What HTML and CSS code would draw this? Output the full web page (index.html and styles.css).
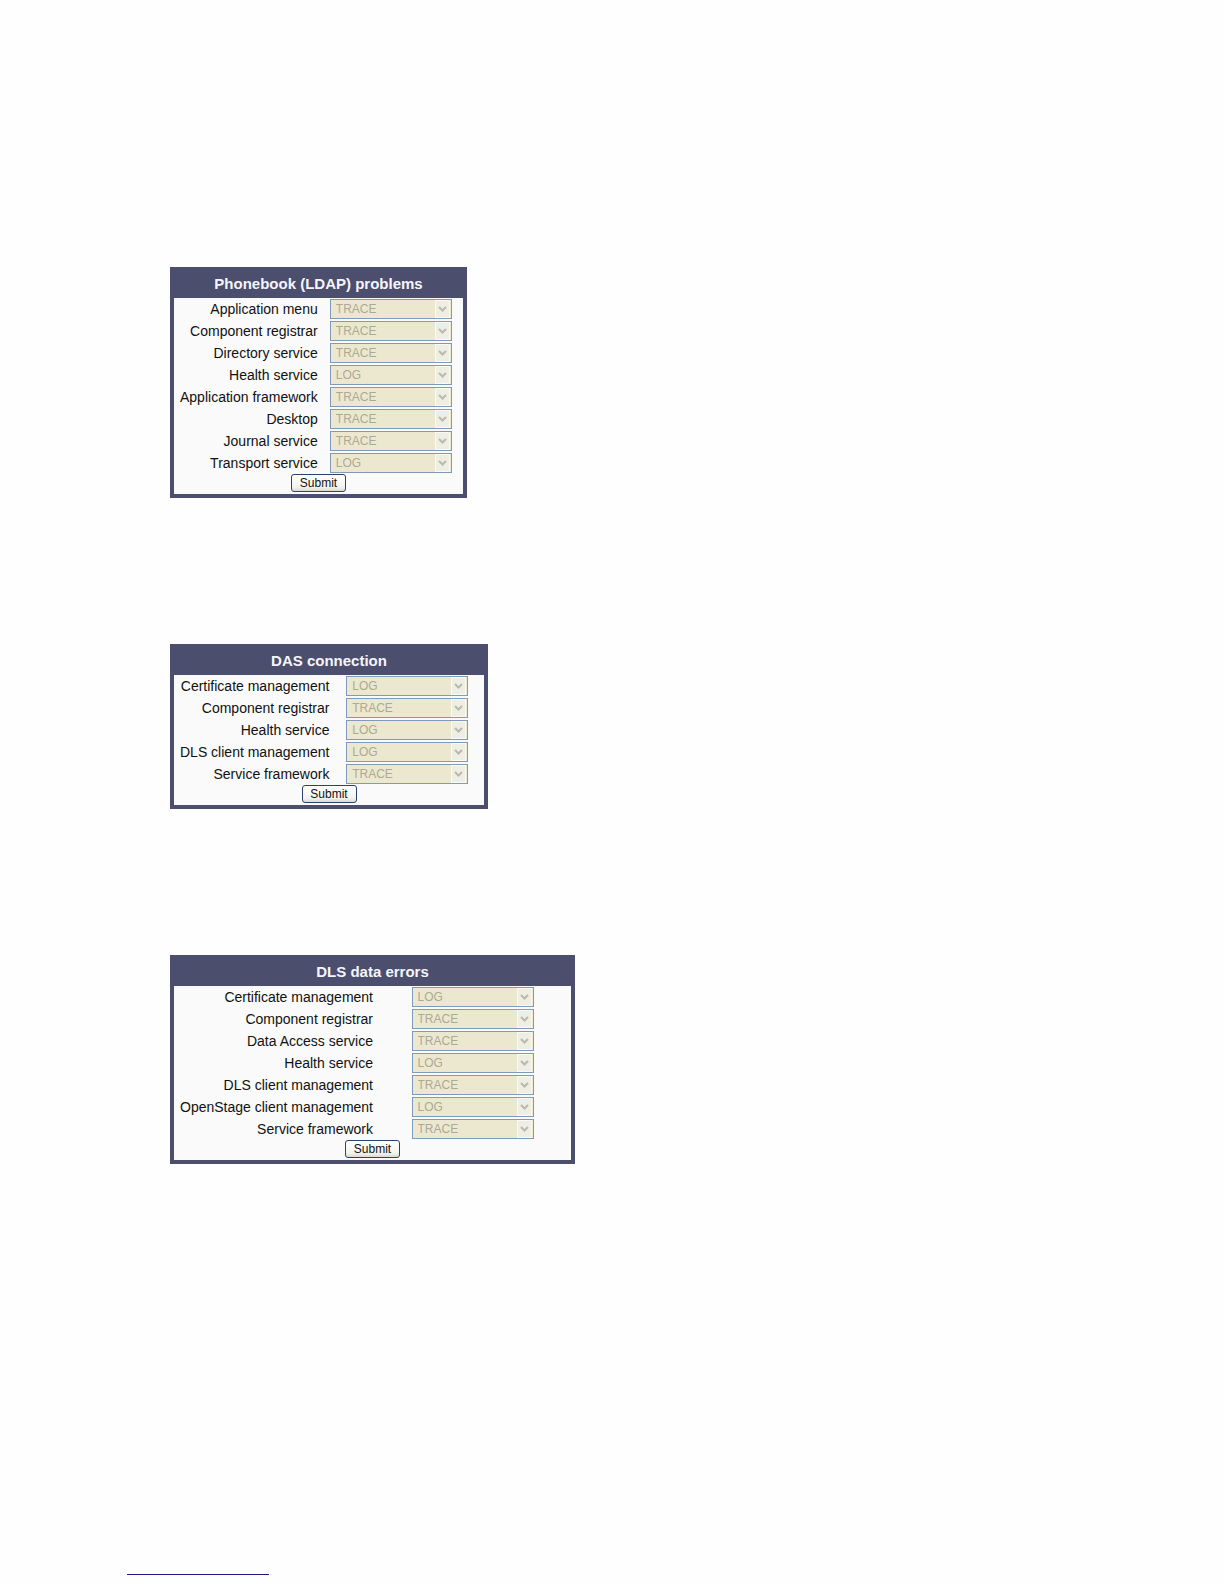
FILE: index.html
```html
<!DOCTYPE html>
<html lang="en">
<head>
  <meta charset="utf-8">
  <title>Fault trace</title>
  <link rel="stylesheet" href="styles.css">
</head>
<body>
  <main class="panels">
    <form class="panel panel-phonebook">
      <h2>Phonebook (LDAP) problems</h2>
      <table>
        <tr>
          <td class="name"><label for="pb-menu">Application menu</label></td>
          <td class="level"><select id="pb-menu" disabled><option>TRACE</option></select></td>
        </tr>
        <tr>
          <td class="name"><label for="pb-registrar">Component registrar</label></td>
          <td class="level"><select id="pb-registrar" disabled><option>TRACE</option></select></td>
        </tr>
        <tr>
          <td class="name"><label for="pb-directory">Directory service</label></td>
          <td class="level"><select id="pb-directory" disabled><option>TRACE</option></select></td>
        </tr>
        <tr>
          <td class="name"><label for="pb-health">Health service</label></td>
          <td class="level"><select id="pb-health" disabled><option>LOG</option></select></td>
        </tr>
        <tr>
          <td class="name"><label for="pb-framework">Application framework</label></td>
          <td class="level"><select id="pb-framework" disabled><option>TRACE</option></select></td>
        </tr>
        <tr>
          <td class="name"><label for="pb-desktop">Desktop</label></td>
          <td class="level"><select id="pb-desktop" disabled><option>TRACE</option></select></td>
        </tr>
        <tr>
          <td class="name"><label for="pb-journal">Journal service</label></td>
          <td class="level"><select id="pb-journal" disabled><option>TRACE</option></select></td>
        </tr>
        <tr>
          <td class="name"><label for="pb-transport">Transport service</label></td>
          <td class="level"><select id="pb-transport" disabled><option>LOG</option></select></td>
        </tr>
      </table>
      <button type="submit">Submit</button>
    </form>

    <form class="panel panel-das">
      <h2>DAS connection</h2>
      <table>
        <tr>
          <td class="name"><label for="das-certificate">Certificate management</label></td>
          <td class="level"><select id="das-certificate" disabled><option>LOG</option></select></td>
        </tr>
        <tr>
          <td class="name"><label for="das-registrar">Component registrar</label></td>
          <td class="level"><select id="das-registrar" disabled><option>TRACE</option></select></td>
        </tr>
        <tr>
          <td class="name"><label for="das-health">Health service</label></td>
          <td class="level"><select id="das-health" disabled><option>LOG</option></select></td>
        </tr>
        <tr>
          <td class="name"><label for="das-client">DLS client management</label></td>
          <td class="level"><select id="das-client" disabled><option>LOG</option></select></td>
        </tr>
        <tr>
          <td class="name"><label for="das-framework">Service framework</label></td>
          <td class="level"><select id="das-framework" disabled><option>TRACE</option></select></td>
        </tr>
      </table>
      <button type="submit">Submit</button>
    </form>

    <form class="panel panel-dls">
      <h2>DLS data errors</h2>
      <table>
        <tr>
          <td class="name"><label for="dls-certificate">Certificate management</label></td>
          <td class="level"><select id="dls-certificate" disabled><option>LOG</option></select></td>
        </tr>
        <tr>
          <td class="name"><label for="dls-registrar">Component registrar</label></td>
          <td class="level"><select id="dls-registrar" disabled><option>TRACE</option></select></td>
        </tr>
        <tr>
          <td class="name"><label for="dls-access">Data Access service</label></td>
          <td class="level"><select id="dls-access" disabled><option>TRACE</option></select></td>
        </tr>
        <tr>
          <td class="name"><label for="dls-health">Health service</label></td>
          <td class="level"><select id="dls-health" disabled><option>LOG</option></select></td>
        </tr>
        <tr>
          <td class="name"><label for="dls-client">DLS client management</label></td>
          <td class="level"><select id="dls-client" disabled><option>TRACE</option></select></td>
        </tr>
        <tr>
          <td class="name"><label for="dls-openstage">OpenStage client management</label></td>
          <td class="level"><select id="dls-openstage" disabled><option>LOG</option></select></td>
        </tr>
        <tr>
          <td class="name"><label for="dls-framework">Service framework</label></td>
          <td class="level"><select id="dls-framework" disabled><option>TRACE</option></select></td>
        </tr>
      </table>
      <button type="submit">Submit</button>
    </form>
  </main>
  <hr class="foot-rule">
</body>
</html>
```

FILE: styles.css
```css
body {
  margin: 0;
  background-color: #fefefe;
  font-family: "Liberation Sans", Arial, sans-serif;
  font-size: 14px;
  color: #111;
}

.panels {
  display: flex;
  flex-direction: column;
  align-items: flex-start;
  gap: 146px;
  padding: 267px 0 410px 170px;
}

.panel {
  display: flex;
  flex-direction: column;
  align-items: center;
  box-sizing: border-box;
  max-width: 100%;
  padding-bottom: 2px;
  border: 4px solid #4c4e6d;
  border-top: 0;
  background-color: #fafafa;
}

/* the level column takes what the labels leave over */
.panel-phonebook {
  width: 297px;
}

.panel-das {
  width: 318px;
}

.panel-dls {
  width: 405px;
}

.panel h2 {
  align-self: stretch;
  margin: 0;
  padding-top: 3px;
  background-color: #4c4e6d;
  color: #f4f5fd;
  font-size: 15px;
  line-height: 28px;
  text-align: center;
}

.panel table {
  width: 100%;
  border-collapse: collapse;
}

.panel td {
  padding: 1px 0;
  line-height: 20px;
  vertical-align: top;
  white-space: nowrap;
}

.panel .name {
  padding-left: 6px;
  padding-right: 1px;
  text-align: right;
}

.panel .level {
  width: 100%;
}

.panel select {
  display: block;
  box-sizing: border-box;
  width: 122px;
  height: 20px;
  margin: 0 auto;
  padding: 0 18px 0 5px;
  appearance: none;
  border: 1px solid #7f9abb;
  border-radius: 0;
  background: #ece8d0 url("data:image/svg+xml,%3Csvg xmlns='http://www.w3.org/2000/svg' width='15' height='18'%3E%3Crect x='.5' y='.5' width='14' height='17' fill='%23eeeee4' stroke='%23fafaf4'/%3E%3Cpath d='M4 7l3.5 3.5L11 7' fill='none' stroke='%23b9b9ac' stroke-width='2'/%3E%3C/svg%3E") no-repeat right 1px center;
  color: #aca994;
  font-family: inherit;
  font-size: 12px;
  opacity: 1;
}

.panel button {
  width: 55px;
  height: 18px;
  padding: 0;
  border: 1px solid #2b4270;
  border-radius: 3px;
  background: linear-gradient(#fff, #f3f3ef 75%, #dcd9cf);
  color: #111;
  font-family: inherit;
  font-size: 12px;
  line-height: 16px;
}

.foot-rule {
  width: 142px;
  height: 1px;
  margin: 0 0 8px 127px;
  border: 0;
  background-color: #1a1a80;
}
```
